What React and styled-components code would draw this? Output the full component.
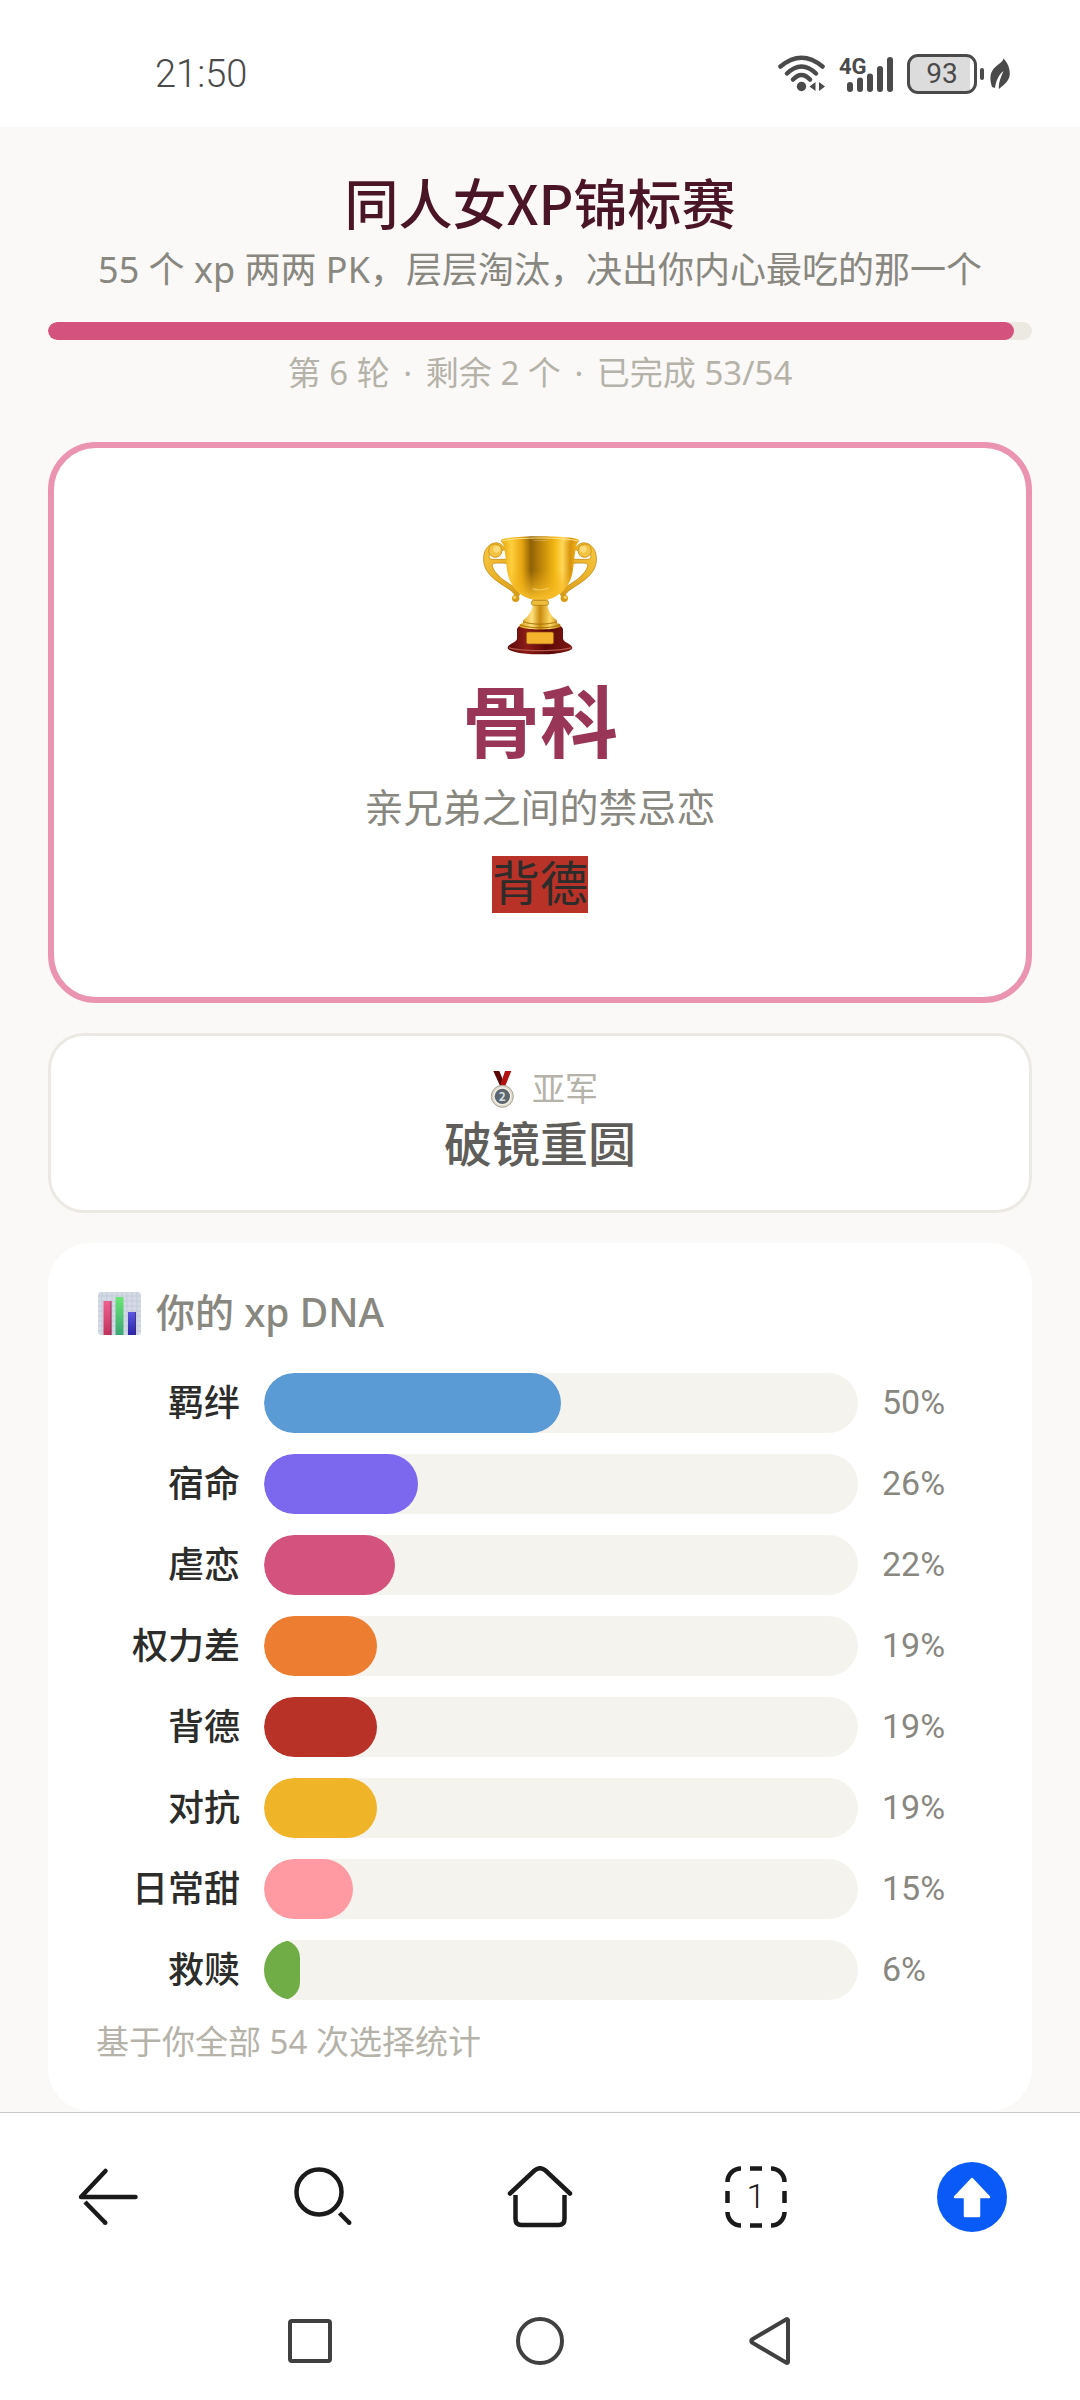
import styled, { createGlobalStyle } from 'styled-components';

const GlobalStyle = createGlobalStyle`
    * {
        box-sizing: border-box;
        margin: 0;
    }

    body {
        font-family: 'Noto Sans CJK SC', sans-serif;
        color: #2c2c2a;
        background-color: #faf9f7;
    }

    svg {
        display: block;
        flex: none;
    }
`

// lines that mix latin and chinese text
const mixedFont = "'Noto Sans', 'Noto Sans CJK SC', sans-serif"

const Page = styled.div`
    display: flex;
    flex-direction: column;
    min-height: 100vh;
`

const StatusBar = styled.header`
    display: flex;
    align-items: center;
    justify-content: space-between;
    height: 127px;
    padding: 20px 70px 0 155px;
    color: #4a4a4a;
    background-color: #fff;
    font-family: Roboto, sans-serif;
`

const Clock = styled.time`
    font-size: 38px;
    font-weight: 300;
    line-height: 48px;
`

const StatusIcons = styled.div`
    display: flex;
    align-items: center;
`

const Signal = styled.svg`
    margin: 0 14px 0 13px;
`

const Battery = styled.div`
    width: 70px;
    height: 40px;
    border: 3px solid #4a4a4a;
    border-radius: 11px;
    background: linear-gradient(to right, #dcdcdc 93%, #fff 93%);
    font-size: 28px;
    line-height: 34px;
    text-align: center;
`

const BatteryTip = styled.div`
    width: 4px;
    height: 12px;
    margin: 0 6px 0 3px;
    border-radius: 2px;
    background-color: #4a4a4a;
`

const Main = styled.main`
    flex: 1;
    padding: 36px 48px 0;
    text-align: center;
`

const Title = styled.h1`
    font-size: 54px;
    font-weight: 500;
    line-height: 78px;
    color: #4b1528;
`

const Subtitle = styled.p`
    margin-top: 2px;
    font-family: ${mixedFont};
    font-size: 36px;
    line-height: 54px;
    color: #888780;
`

const Progress = styled.div`
    height: 18px;
    margin-top: 25px;
    border-radius: 9px;
    overflow: hidden;
    background-color: #ece9e2;
`

const ProgressFill = styled.div`
    height: 100%;
    border-radius: 9px;
    background-color: #d4537e;
`

const Meta = styled.p`
    margin-top: 9px;
    font-family: ${mixedFont};
    font-size: 33px;
    line-height: 48px;
    color: #b4b2a9;
`

const Dot = styled.span`
    margin: 0 5px;
`

const Champion = styled.section`
    display: flex;
    flex-direction: column;
    align-items: center;
    margin-top: 45px;
    padding: 84px 48px;
    border: 6px solid #ea94b1;
    border-radius: 48px;
    background-color: #fff;
`

const TrophyBox = styled.div`
    display: flex;
    align-items: center;
    height: 126px;
`

const ChampionName = styled.h2`
    margin-top: 12px;
    font-size: 78px;
    font-weight: 700;
    line-height: 96px;
    color: #993556;
`

const ChampionText = styled.p`
    margin-top: 12px;
    font-size: 39px;
    line-height: 54px;
    color: #888780;
`

const Tag = styled.span`
    margin-top: 24px;
    padding-bottom: 9px;
    font-size: 48px;
    line-height: 48px;
    background-color: #b83228;
`

const RunnerUp = styled.section`
    margin-top: 30px;
    padding: 27px 36px 39px;
    border: 3px solid #ece9e4;
    border-radius: 36px;
    background-color: #fff;
`

const RunnerUpLabel = styled.p`
    display: flex;
    align-items: center;
    justify-content: center;
    gap: 9px;
    font-size: 33px;
    line-height: 48px;
    color: #b4b2a9;
`

const RunnerUpName = styled.h3`
    font-size: 48px;
    font-weight: 500;
    line-height: 60px;
    color: #5f5e5a;
`

const Dna = styled.section`
    margin-top: 30px;
    padding: 42px 48px 45px;
    border-radius: 42px;
    background-color: #fff;
    text-align: left;
`

const DnaTitle = styled.h3`
    display: flex;
    align-items: center;
    gap: 12px;
    font-family: ${mixedFont};
    font-size: 39px;
    font-weight: 500;
    line-height: 54px;
    color: #888780;
`

const Bars = styled.ul`
    display: flex;
    flex-direction: column;
    gap: 21px;
    margin-top: 34px;
    padding: 0;
    list-style: none;
`

const Bar = styled.li`
    display: grid;
    grid-template-columns: 144px 1fr 102px;
    column-gap: 24px;
`

const BarLabel = styled.span`
    font-size: 36px;
    font-weight: 500;
    line-height: 54px;
    text-align: right;
`

const BarTrack = styled.div`
    height: 60px;
    border-radius: 30px;
    overflow: hidden;
    background-color: #f4f3ee;
`

const BarFill = styled.div`
    height: 100%;
    border-radius: 30px;
    background-color: ${({ $color }) => $color};
`

const BarValue = styled.span`
    font-family: Roboto, sans-serif;
    font-size: 34px;
    line-height: 58px;
    color: #888780;
`

const DnaNote = styled.p`
    margin-top: 18px;
    font-family: ${mixedFont};
    font-size: 33px;
    line-height: 48px;
    color: #b4b2a9;
`

const Toolbar = styled.nav`
    display: grid;
    grid-template-columns: repeat(5, 1fr);
    height: 169px;
    border-top: 1px solid #c8c8c8;
    background-color: #fff;
`

const SystemBar = styled.nav`
    display: flex;
    justify-content: center;
    height: 119px;
    background-color: #fff;
`

const IconButton = styled.button`
    display: flex;
    align-items: center;
    justify-content: center;
    padding: 0;
    border: none;
    background: none;
    color: #1a1a1a;
`

const SystemButton = styled(IconButton)`
    width: 230px;
    color: #404040;
`

const bars = [
    { label: '羁绊', value: 50, color: '#5b9bd5' },
    { label: '宿命', value: 26, color: '#7b68ee' },
    { label: '虐恋', value: 22, color: '#d4537e' },
    { label: '权力差', value: 19, color: '#ed7d31' },
    { label: '背德', value: 19, color: '#b83228' },
    { label: '对抗', value: 19, color: '#f0b429' },
    { label: '日常甜', value: 15, color: '#ff9aa2' },
    { label: '救赎', value: 6, color: '#70ad47' },
]

const done = 53
const total = 54

const WifiIcon = () => (
    <svg width="48" height="38" viewBox="0 0 48 38" fill="none" stroke="currentColor" strokeWidth="4.5" strokeLinecap="round">
        <path d="M2.5 11.5Q23.5-6 44.5 11.5" />
        <path d="M9 18.5Q23.5 4.5 38 18.5" />
        <path d="M15 24.5Q23.5 15.5 32 24.5" />
        <circle cx="23.5" cy="31.5" r="4.7" fill="currentColor" stroke="none" />
        <path d="M31.5 31.5l6-4.5v9zM47 31.5l-6-4.5v9z" fill="currentColor" stroke="none" />
    </svg>
)

const SignalIcon = () => (
    <Signal width="54" height="54" viewBox="0 -8 54 54">
        <text x="0" y="19" fontSize="22" fontWeight="700" fill="currentColor">4G</text>
        <path
            d="M11 30v4M21 25.5V34M31 21.5V34M41 14V34M51 5V34"
            stroke="currentColor" strokeWidth="6" strokeLinecap="round"
        />
    </Signal>
)

const LeafIcon = () => (
    <svg width="20" height="32" viewBox="0 0 20 32" fill="currentColor">
        <path d="M13.5 0.5C19 6 21.5 15 18.5 21C16.5 25.5 12 28 9 31C8 26 10.5 20 13.5 13C8.5 17 6 23 5 30L2 29C-1 20 0 13 7 7.5C11 4.5 13 3 13.5 0.5Z" />
    </svg>
)

const TrophyHandle = () => (
    <>
        <path
            d="M66 44C58 22 36 18 20 30C4 42-1 64 3 86C8 116 40 138 62 152C82 165 94 172 98 186L110 180C105 160 84 150 66 138C46 124 28 104 28 90C30 83 40 84 74 85V73H30C20 73 16 66 20 56Z"
            fill="url(#handle)" stroke="#b87f0c" strokeWidth="2"
        />
        <circle cx="37" cy="47" r="20" fill="#f3c443" stroke="#cf9718" strokeWidth="3" />
        <circle cx="41" cy="43" r="10" fill="#fbdc7c" />
        <circle cx="98" cy="190" r="11" fill="#d79a13" />
        <circle cx="95" cy="187" r="5" fill="#f8d467" />
    </>
)

const Trophy = () => (
    <svg width="114" height="120" viewBox="0 0 342 360" role="img" aria-label="冠军">
        <defs>
            <linearGradient id="cup">
                <stop offset="0" stopColor="#e9a90f" />
                <stop offset="0.12" stopColor="#ffcf3d" />
                <stop offset="0.26" stopColor="#e7a50e" />
                <stop offset="0.38" stopColor="#8f6207" />
                <stop offset="0.5" stopColor="#b98108" />
                <stop offset="0.7" stopColor="#f5b915" />
                <stop offset="0.8" stopColor="#ffd75a" />
                <stop offset="0.9" stopColor="#d8930c" />
                <stop offset="1" stopColor="#f2b51d" />
            </linearGradient>
            <linearGradient id="glow" x1="0" y1="0" x2="0" y2="1">
                <stop offset="0.5" stopColor="#f0ae10" stopOpacity="0" />
                <stop offset="1" stopColor="#f8c02c" />
            </linearGradient>
            <linearGradient id="stem">
                <stop offset="0" stopColor="#d89a12" />
                <stop offset="0.3" stopColor="#ffe27e" />
                <stop offset="0.5" stopColor="#c88a0c" />
                <stop offset="0.75" stopColor="#ffdc68" />
                <stop offset="1" stopColor="#b97a08" />
            </linearGradient>
            <linearGradient id="handle" x1="0" y1="0" x2="1" y2="1">
                <stop offset="0" stopColor="#f9c93f" />
                <stop offset="1" stopColor="#d99a14" />
            </linearGradient>
            <linearGradient id="base">
                <stop offset="0" stopColor="#5a0a0a" />
                <stop offset="0.3" stopColor="#8d1c18" />
                <stop offset="0.6" stopColor="#5c0707" />
                <stop offset="1" stopColor="#7d1915" />
            </linearGradient>
        </defs>
        <TrophyHandle />
        <g transform="translate(342) scale(-1 1)"><TrophyHandle /></g>
        <path d="M102 282Q104 274 112 272H230Q238 274 240 282V312C244 324 266 326 268 338C268 350 220 358 171 358S74 350 74 338C76 326 98 324 102 312Z" fill="url(#base)" />
        <path d="M78 338C110 350 232 350 264 338" fill="none" stroke="#b4574a" strokeWidth="4" />
        <rect x="130" y="291" width="82" height="36" rx="5" fill="#f5b32d" stroke="#8d4a10" strokeWidth="2" />
        <path d="M150 196H192C192 226 206 246 222 256V264L232 268V276C210 286 132 286 110 276V268L120 264V256C136 246 150 226 150 196Z" fill="url(#stem)" />
        <path d="M120 260C146 270 196 270 222 260M112 270C140 281 202 281 230 270" fill="none" stroke="#a87209" strokeWidth="3" />
        <path d="M58 18C66 44 68 70 71 96C76 148 104 184 152 194H190C238 184 266 148 271 96C274 70 276 44 284 18Z" fill="url(#cup)" />
        <path d="M58 18C66 44 68 70 71 96C76 148 104 184 152 194H190C238 184 266 148 271 96C274 70 276 44 284 18Z" fill="url(#glow)" />
        <path d="M150 162Q171 168 196 160" fill="none" stroke="#ffe28a" strokeWidth="4" strokeLinecap="round" opacity="0.5" />
        <path d="M54 16C56 0 286 0 288 16C288 24 282 28 278 26C230 14 112 14 64 26C58 28 54 24 54 16Z" fill="url(#cup)" />
        <path d="M57 18C100 6 242 6 285 18" fill="none" stroke="#ffe08a" strokeWidth="3" />
        <rect x="145" y="196" width="52" height="15" rx="7" fill="#eebd3b" stroke="#a87209" strokeWidth="2" />
    </svg>
)

const Medal = () => (
    <svg width="41" height="41" viewBox="0 -6 123 123" role="img" aria-label="银牌">
        <path d="M34 6H52L70 50H54Z" fill="#5c0606" />
        <path d="M88 6H69L54 50H70Z" fill="#b31212" />
        <circle cx="61" cy="82" r="33" fill="#ded9cc" stroke="#a8a397" strokeWidth="3" />
        <circle cx="61" cy="82" r="27" fill="#f4f0e4" />
        <circle cx="61" cy="82" r="23" fill="#5c666e" />
        <text x="61" y="95" fontSize="36" fontWeight="700" textAnchor="middle" fill="#d4dce0">2</text>
    </svg>
)

const ChartIcon = () => (
    <svg width="48" height="48" viewBox="-2 -4 48 48" aria-hidden="true">
        <defs>
            <linearGradient id="pink" x1="0" y1="0" x2="0" y2="1">
                <stop offset="0" stopColor="#f0608f" />
                <stop offset="1" stopColor="#c1335c" />
            </linearGradient>
            <linearGradient id="green" x1="0" y1="0" x2="0" y2="1">
                <stop offset="0" stopColor="#6be673" />
                <stop offset="1" stopColor="#3ba676" />
            </linearGradient>
            <linearGradient id="blue" x1="0" y1="0" x2="0" y2="1">
                <stop offset="0" stopColor="#5b57de" />
                <stop offset="1" stopColor="#2b23a8" />
            </linearGradient>
        </defs>
        <rect width="43" height="43" rx="3" fill="#d5dae6" />
        <path
            d="M4 0v43M9 0v43M14 0v43M19 0v43M24 0v43M29 0v43M34 0v43M39 0v43M0 4h43M0 9h43M0 14h43M0 19h43M0 24h43M0 29h43M0 34h43M0 39h43"
            stroke="#c2cad9"
        />
        <path d="M5.5 9h8v34h-8z" fill="url(#pink)" />
        <path d="M17.5 5h8v38h-8z" fill="url(#green)" />
        <path d="M30 20h8v23h-8z" fill="url(#blue)" />
        <path d="M13 9v34M37.5 20v23" stroke="#3b2350" strokeOpacity="0.5" />
    </svg>
)

const BackIcon = () => (
    <svg width="60" height="60" viewBox="0 0 60 60" fill="none" stroke="currentColor" strokeWidth="4.5">
        <path d="M57.5 30H3L27.5 4" strokeLinecap="round" strokeLinejoin="round" />
        <path d="M7 35L27.5 56" />
        <circle cx="27.3" cy="55.8" r="2.2" fill="currentColor" stroke="none" />
    </svg>
)

const SearchIcon = () => (
    <svg width="60" height="60" viewBox="0 0 60 60" fill="none" stroke="currentColor" strokeWidth="4.5">
        <circle cx="25" cy="25" r="22.5" />
        <path d="M45.5 46L55.5 56" />
        <circle cx="55.3" cy="55.8" r="2.2" fill="currentColor" stroke="none" />
    </svg>
)

const HomeIcon = () => (
    <svg width="66" height="62" viewBox="0 0 66 62" fill="none" stroke="currentColor" strokeWidth="4.5">
        <path d="M3 27.5L27.5 4.5Q33 0 38.5 4.5L63 27.5" strokeLinecap="round" />
        <path d="M8.5 29V53Q8.5 59 14.5 59H51.5Q57.5 59 57.5 53V29" />
    </svg>
)

const TabsIcon = () => (
    <svg width="62" height="62" viewBox="0 0 62 62" fill="none" stroke="currentColor" strokeWidth="4.5">
        <path d="M2.5 16A13.5 13.5 0 0 1 16 2.5M46 2.5A13.5 13.5 0 0 1 59.5 16M59.5 46A13.5 13.5 0 0 1 46 59.5M16 59.5A13.5 13.5 0 0 1 2.5 46" />
        <path d="M25 2.5h12M59.5 25v12M25 59.5h12M2.5 25v12" />
        <text
            x="31" y="42" fontSize="34" fontWeight="300" fontFamily="Roboto, sans-serif"
            textAnchor="middle" fill="currentColor" stroke="none"
        >
            1
        </text>
    </svg>
)

const UpIcon = () => (
    <svg width="70" height="70" viewBox="0 0 70 70">
        <circle cx="35" cy="35" r="35" fill="#0a5af8" />
        <path
            d="M35 17L52 35H42V54H28V35H18Z"
            fill="#fff" stroke="#fff" strokeWidth="2.5" strokeLinejoin="round"
        />
    </svg>
)

const App = () => (
    <Page>
        <GlobalStyle />

        <StatusBar>
            <Clock>21:50</Clock>
            <StatusIcons>
                <WifiIcon />
                <SignalIcon />
                <Battery>93</Battery>
                <BatteryTip />
                <LeafIcon />
            </StatusIcons>
        </StatusBar>

        <Main>
            <Title>同人女XP锦标赛</Title>
            <Subtitle>55 个 xp 两两 PK，层层淘汰，决出你内心最吃的那一个</Subtitle>
            <Progress>
                <ProgressFill style={{ width: `${done / total * 100}%` }} />
            </Progress>
            <Meta>
                第 6 轮 <Dot>·</Dot> 剩余 2 个 <Dot>·</Dot> 已完成 {done}/{total}
            </Meta>

            <Champion>
                <TrophyBox><Trophy /></TrophyBox>
                <ChampionName>骨科</ChampionName>
                <ChampionText>亲兄弟之间的禁忌恋</ChampionText>
                <Tag>背德</Tag>
            </Champion>

            <RunnerUp>
                <RunnerUpLabel><Medal />亚军</RunnerUpLabel>
                <RunnerUpName>破镜重圆</RunnerUpName>
            </RunnerUp>

            <Dna>
                <DnaTitle><ChartIcon />你的 xp DNA</DnaTitle>
                <Bars>
                    {bars.map(({ label, value, color }) => (
                        <Bar key={label}>
                            <BarLabel>{label}</BarLabel>
                            <BarTrack>
                                <BarFill $color={color} style={{ width: `${value}%` }} />
                            </BarTrack>
                            <BarValue>{value}%</BarValue>
                        </Bar>
                    ))}
                </Bars>
                <DnaNote>基于你全部 {total} 次选择统计</DnaNote>
            </Dna>
        </Main>

        <Toolbar>
            <IconButton aria-label="返回"><BackIcon /></IconButton>
            <IconButton aria-label="搜索"><SearchIcon /></IconButton>
            <IconButton aria-label="主页"><HomeIcon /></IconButton>
            <IconButton aria-label="标签页"><TabsIcon /></IconButton>
            <IconButton aria-label="回到顶部"><UpIcon /></IconButton>
        </Toolbar>
        <SystemBar>
            <SystemButton aria-label="最近任务">
                <svg width="44" height="44" viewBox="0 0 44 44" fill="none" stroke="currentColor" strokeWidth="4">
                    <rect x="2" y="2" width="40" height="40" rx="2" />
                </svg>
            </SystemButton>
            <SystemButton aria-label="桌面">
                <svg width="48" height="48" viewBox="0 0 48 48" fill="none" stroke="currentColor" strokeWidth="4">
                    <circle cx="24" cy="24" r="22" />
                </svg>
            </SystemButton>
            <SystemButton aria-label="后退">
                <svg width="42" height="48" viewBox="0 0 42 48" fill="none" stroke="currentColor" strokeWidth="4" strokeLinejoin="round">
                    <path d="M39 3V45Q38.5 46.5 37 45.5L3 25.5Q1.5 24 3 22.5L37 2.5Q38.5 1.5 39 3Z" />
                </svg>
            </SystemButton>
        </SystemBar>
    </Page>
)

export default App
